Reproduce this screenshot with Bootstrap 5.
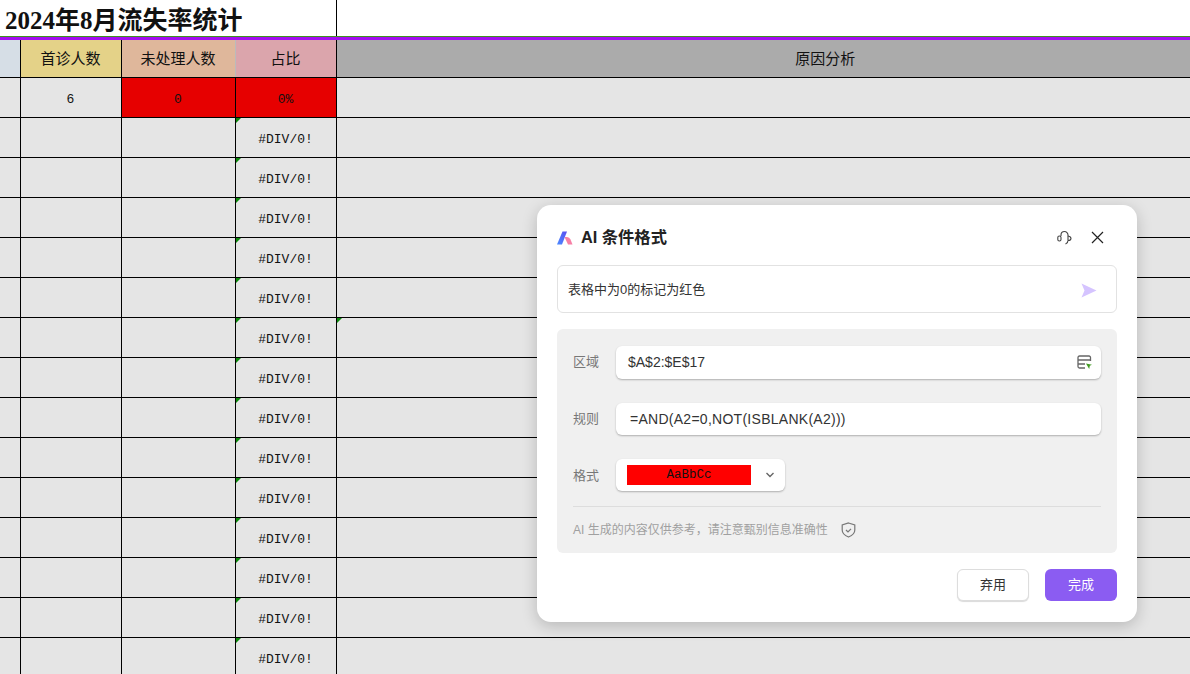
<!DOCTYPE html>
<html lang="zh-CN">
<head>
    <meta charset="UTF-8">
    <meta name="viewport" content="width=device-width, initial-scale=1.0">
    <title>2024年8月流失率统计</title>
    <link href="https://cdn.jsdelivr.net/npm/bootstrap@5.3.0/dist/css/bootstrap.min.css" rel="stylesheet">
    <style>
        html, body {
            height: 100%;
            overflow: hidden;
            background-color: #fff;
        }
        body {
            font-family: "Liberation Sans", "Noto Sans CJK SC", sans-serif;
            color: #222;
        }
        .sheet-title-row {
            height: 37px;
            border-bottom: 1px solid #3f8f1f;
        }
        .sheet-title {
            width: 337px;
            height: 36px;
            padding: 0 0 0 5px;
            border-right: 1px solid #000;
            font-family: "Liberation Serif", "Noto Sans CJK SC", serif;
            font-size: 25px;
            font-weight: 700;
            line-height: 42px;
            color: #111;
        }
        .sheet-accent {
            height: 3px;
            background-color: #a30cf0;
        }
        .sheet-grid {
            width: 1190px;
            table-layout: fixed;
            border-collapse: collapse;
            font-family: "Liberation Mono", "Noto Sans CJK SC", monospace;
            font-size: 13px;
            color: #111;
        }
        .sheet-grid td {
            position: relative;
            height: 40px;
            padding: 6px 0 0;
            border: 1px solid #000;
            border-top: 0;
            background-color: #e5e5e5;
            text-align: center;
            vertical-align: middle;
        }
        .sheet-grid td:first-child { border-left: 0; }
        .sheet-grid td:last-child { border-right: 0; }
        .sheet-grid tr.head-row td {
            height: 37px;
            padding: 0;
            font-family: "Noto Sans CJK SC", sans-serif;
            font-size: 15px;
        }
        .head-blank { background-color: #d6dee6 !important; }
        .head-first { background-color: #e4d288 !important; }
        .head-second { background-color: #dfb79b !important; border-right-color: #bbb !important; }
        .head-third { background-color: #dba5ac !important; }
        .sheet-grid tr.head-row td.head-fourth {
            padding-left: 124px;
            background-color: #ababab;
        }
        .cell-red { background-color: #e60000 !important; }
        .has-tick::before {
            content: "";
            position: absolute;
            top: 0;
            left: 0;
            border-top: 5px solid #0a8a0a;
            border-right: 5px solid transparent;
        }

        .ai-dialog {
            position: absolute;
            left: 537px;
            top: 205px;
            width: 600px;
            height: 417px;
            padding: 20px;
            background-color: #fff;
            border-radius: 14px;
            box-shadow: 0 4px 16px rgba(0, 0, 0, .2);
        }
        .ai-head {
            height: 25px;
            margin-bottom: 15px;
            padding-right: 13px;
        }
        .ai-name {
            font-size: 16.300px;
            font-weight: 700;
            color: #222;
        }
        .ai-prompt {
            height: 48px;
            padding: 2px 19px 0 10px;
            margin-bottom: 16px;
            border: 1px solid #e2e2e2;
            border-radius: 6px;
            font-size: 13px;
            color: #333;
        }
        .ai-panel {
            height: 224px;
            padding: 17px 16px 0;
            margin-bottom: 16px;
            background-color: #f0f0f0;
            border-radius: 6px;
        }
        .ai-field {
            margin-bottom: 24px;
        }
        .ai-label {
            width: 43px;
            font-size: 13px;
            color: #777;
        }
        .ai-field:nth-child(1) .ai-label { margin-top: -2px; }
        .ai-field:nth-child(3) .ai-label { margin-top: 2px; }
        .ai-input {
            height: 33px;
            padding: 0 9px 0 12px;
            background-color: #fff;
            border-radius: 6px;
            box-shadow: 0 1px 2px rgba(0, 0, 0, .28);
            font-size: 14px;
            color: #333;
        }
        .ai-rule {
            height: 32px;
            padding-left: 14px;
            letter-spacing: .27px;
        }
        .ai-format {
            width: 169px;
            height: 32px;
            padding: 0 10px 0 11px;
        }
        .ai-swatch {
            width: 124px;
            height: 20px;
            background-color: #f00;
            color: #111;
            font-family: "Liberation Mono", monospace;
            font-size: 12.500px;
            line-height: 20px;
            text-align: center;
        }
        .ai-note {
            padding-top: 14px;
            margin-top: -9px;
            border-top: 1px solid #ddd;
            font-size: 12px;
            color: #a0a0a0;
        }
        .ai-shield {
            margin-left: 13px;
        }
        .ai-close {
            margin-left: 19px;
        }
        .btn-discard, .btn-finish {
            width: 72px;
            height: 32px;
            padding: 0;
            border-radius: 6px;
            font-size: 13px;
        }
        .btn-discard {
            background-color: #fff;
            border: 1px solid #ddd;
            box-shadow: 0 1px 1px rgba(0, 0, 0, .15);
            color: #333;
        }
        .btn-finish {
            background-color: #8b5cf2;
            border: 0;
            color: #fff;
        }
    </style>
</head>
<body>
    <div class="sheet-title-row">
        <div class="sheet-title">2024年8月流失率统计</div>
    </div>
    <div class="sheet-accent"></div>

    <table class="sheet-grid">
        <colgroup>
            <col style="width: 20px">
            <col style="width: 101px">
            <col style="width: 114px">
            <col style="width: 101px">
            <col>
        </colgroup>
        <tbody id="sheetBody">
            <tr class="head-row">
                <td class="head-blank"></td>
                <td class="head-first">首诊人数</td>
                <td class="head-second">未处理人数</td>
                <td class="head-third">占比</td>
                <td class="head-fourth">原因分析</td>
            </tr>
            <tr>
                <td></td>
                <td>6</td>
                <td class="cell-red">0</td>
                <td class="cell-red">0%</td>
                <td></td>
            </tr>
        </tbody>
    </table>

    <div class="ai-dialog">
        <div class="ai-head d-flex align-items-center">
            <svg width="16" height="14" viewBox="0 0 16 14" class="me-2">
                <defs>
                    <linearGradient id="logoBlue" x1="0" y1="1" x2="1" y2="0">
                        <stop offset="0" stop-color="#4a8bff"/>
                        <stop offset="1" stop-color="#5b4df0"/>
                    </linearGradient>
                </defs>
                <path d="M0 13.500 L5.500 0.500 L10 0.500 L5 13.500 Z" fill="url(#logoBlue)"/>
                <path d="M7.500 6 L10 6 Q12.500 6 13.500 8.500 L15.500 13.500 L11 13.500 Z" fill="#f77fa5"/>
            </svg>
            <span class="ai-name">AI 条件格式</span>
            <svg width="15" height="15" viewBox="0 0 15 15" class="ms-auto" fill="none" stroke="#444" stroke-width="1.100">
                <path d="M4 6 V5 a3.500 3.500 0 0 1 7 0 V10.500"/>
                <rect x="0.800" y="6" width="3.200" height="5" rx="1.500"/>
                <path d="M11 6 Q14 6.500 14 8.500 Q14 10.500 11 10.500"/>
                <path d="M11 10.500 Q11 13 8.500 14"/>
            </svg>
            <svg width="13" height="13" viewBox="0 0 13 13" class="ai-close" fill="none" stroke="#222" stroke-width="1.200">
                <path d="M1 1 L12 12 M12 1 L1 12"/>
            </svg>
        </div>

        <div class="ai-prompt d-flex align-items-center justify-content-between">
            <span>表格中为0的标记为红色</span>
            <svg width="16" height="15" viewBox="0 0 16 15">
                <path d="M0.500 0.500 L15.500 7.500 L0.500 14.500 L3.500 7.500 Z" fill="#d5c4ff"/>
            </svg>
        </div>

        <div class="ai-panel">
            <div class="ai-field d-flex align-items-center">
                <div class="ai-label">区域</div>
                <div class="ai-input flex-grow-1 d-flex align-items-center justify-content-between">
                    <span>$A$2:$E$17</span>
                    <svg width="15" height="15" viewBox="0 0 15 15" fill="none" stroke="#666" stroke-width="1.300">
                        <path d="M13.500 6 V2.500 a1.500 1.500 0 0 0 -1.500 -1.500 H2.500 a1.500 1.500 0 0 0 -1.500 1.500 V11.500 a1.500 1.500 0 0 0 1.500 1.500 H8"/>
                        <path d="M1 5 H13.500 M1 9 H8"/>
                        <path d="M9 8.500 L15 9.800 L12.800 10.800 L12.200 14 Z" fill="#3f9a1f" stroke="none"/>
                    </svg>
                </div>
            </div>
            <div class="ai-field d-flex align-items-center">
                <div class="ai-label">规则</div>
                <div class="ai-input ai-rule flex-grow-1 d-flex align-items-center">=AND(A2=0,NOT(ISBLANK(A2)))</div>
            </div>
            <div class="ai-field d-flex align-items-center">
                <div class="ai-label">格式</div>
                <div class="ai-input ai-format d-flex align-items-center justify-content-between">
                    <div class="ai-swatch">AaBbCc</div>
                    <svg width="10" height="6" viewBox="0 0 10 6" fill="none" stroke="#666" stroke-width="1.400">
                        <path d="M1.500 1 L5 4.500 L8.500 1"/>
                    </svg>
                </div>
            </div>
            <div class="ai-note d-flex align-items-center">
                <span>AI 生成的内容仅供参考，请注意甄别信息准确性</span>
                <svg width="15" height="16" viewBox="0 0 15 16" class="ai-shield" fill="none" stroke="#777" stroke-width="1.200">
                    <path d="M7.500 1 L13.800 3 V8 Q13.800 12.500 7.500 15 Q1.200 12.500 1.200 8 V3 Z"/>
                    <path d="M5 8 L7 10 L10 6.800"/>
                </svg>
            </div>
        </div>

        <div class="d-flex justify-content-end gap-3">
            <button type="button" class="btn btn-discard">弃用</button>
            <button type="button" class="btn btn-finish">完成</button>
        </div>
    </div>

    <script src="https://cdn.jsdelivr.net/npm/bootstrap@5.3.0/dist/js/bootstrap.bundle.min.js"></script>
    <script>
        // linhas de #DIV/0! iguais, geradas aqui
        const sheetBody = document.getElementById('sheetBody');
        for (let i = 0; i < 14; i++) {
            const row = document.createElement('tr');
            const lastTick = i === 5 ? ' class="has-tick"' : '';
            row.innerHTML = `<td></td><td></td><td></td><td class="has-tick">#DIV/0!</td><td${lastTick}></td>`;
            sheetBody.appendChild(row);
        }
    </script>
</body>
</html>
